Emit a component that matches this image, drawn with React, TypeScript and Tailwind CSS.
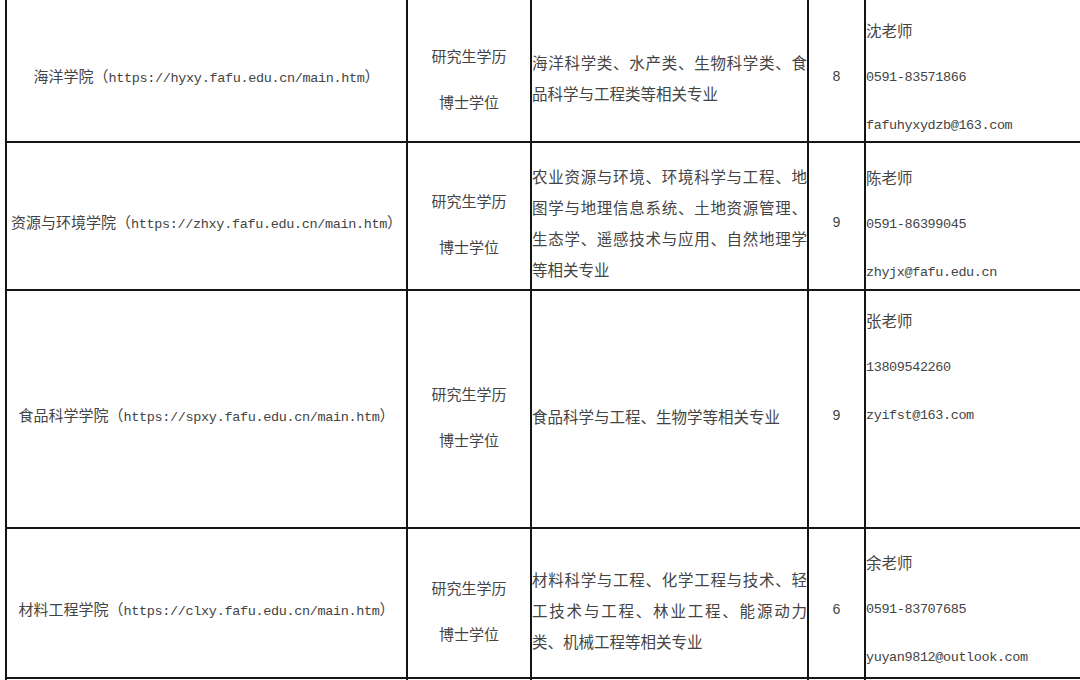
const cjk = "font-['Noto_Sans_CJK_SC',sans-serif]";
const mono = "font-['Liberation_Mono','Noto_Sans_CJK_SC',monospace]";

interface Row {
  height: string;
  college: string;
  url: string;
  majors: string;
  count: string;
  contact: string[];
  contactTop: string;
}

const rows: Row[] = [
  {
    height: 'h-[143px]',
    college: '海洋学院',
    url: 'https://hyxy.fafu.edu.cn/main.htm',
    majors: '海洋科学类、水产类、生物科学类、食品科学与工程类等相关专业',
    count: '8',
    contact: ['沈老师', '0591-83571866', 'fafuhyxydzb@163.com'],
    contactTop: 'pt-[20px]',
  },
  {
    height: 'h-[148px]',
    college: '资源与环境学院',
    url: 'https://zhxy.fafu.edu.cn/main.htm',
    majors: '农业资源与环境、环境科学与工程、地图学与地理信息系统、土地资源管理、生态学、遥感技术与应用、自然地理学等相关专业',
    count: '9',
    contact: ['陈老师', '0591-86399045', 'zhyjx@fafu.edu.cn'],
    contactTop: 'pt-[24px]',
  },
  {
    height: 'h-[238px]',
    college: '食品科学学院',
    url: 'https://spxy.fafu.edu.cn/main.htm',
    majors: '食品科学与工程、生物学等相关专业',
    count: '9',
    contact: ['张老师', '13809542260', 'zyifst@163.com'],
    contactTop: 'pt-[19px]',
  },
  {
    height: 'h-[150px]',
    college: '材料工程学院',
    url: 'https://clxy.fafu.edu.cn/main.htm',
    majors: '材料科学与工程、化学工程与技术、轻工技术与工程、林业工程、能源动力类、机械工程等相关专业',
    count: '6',
    contact: ['余老师', '0591-83707685', 'yuyan9812@outlook.com'],
    contactTop: 'pt-[23px]',
  },
];

function ContactLine({ text }: { text: string }) {
  // names are Chinese, phone numbers and mail addresses are half-width
  if (/[\u4e00-\u9fff]/.test(text)) {
    return <div className={`${cjk} text-[15.5px] leading-[20px]`}>{text}</div>;
  }
  return <div className={`${mono} text-[13.5px] leading-[20px] tracking-[-0.4px]`}>{text}</div>;
}

function TableRow({ row }: { row: Row }) {
  return (
    <div className={`grid grid-cols-[401px_124px_277px_57px_340px] border-b-2 border-[#151515] ${row.height}`}>
      <div className="flex items-center justify-center border-r-2 border-[#151515] pt-[14px]">
        <span className={`${cjk} text-[15px] leading-[20px] whitespace-nowrap`}>
          {row.college}（<span className={`${mono} text-[13.5px] tracking-[-0.35px]`}>{row.url}</span>）
        </span>
      </div>
      <div className={`flex flex-col items-center justify-center gap-[26px] border-r-2 border-[#151515] pt-[16px] ${cjk} text-[15px] leading-[20px]`}>
        <div>研究生学历</div>
        <div>博士学位</div>
      </div>
      <div className="flex items-center border-r-2 border-[#151515] pt-[14px]">
        <p className={`${cjk} text-[15.5px] leading-[31px] text-justify w-full`}>{row.majors}</p>
      </div>
      <div className={`flex items-center justify-center border-r-2 border-[#151515] pt-[14px] ${mono} text-[14px]`}>
        {row.count}
      </div>
      <div className={`flex flex-col gap-[28px] ${row.contactTop}`}>
        {row.contact.map((line) => (
          <ContactLine key={line} text={line} />
        ))}
      </div>
    </div>
  );
}

export default function App() {
  return (
    <div className="h-[680px] w-[1080px] overflow-hidden bg-white pl-[5px] text-[#444]">
      <div className="w-[1210px] border-l-2 border-[#151515]">
        {rows.map((row) => (
          <TableRow key={row.college} row={row} />
        ))}
        <div className="grid h-[40px] grid-cols-[401px_124px_277px_57px_340px]">
          <div className="border-r-2 border-[#151515]" />
          <div className="border-r-2 border-[#151515]" />
          <div className="border-r-2 border-[#151515]" />
          <div className="border-r-2 border-[#151515]" />
          <div />
        </div>
      </div>
    </div>
  );
}
